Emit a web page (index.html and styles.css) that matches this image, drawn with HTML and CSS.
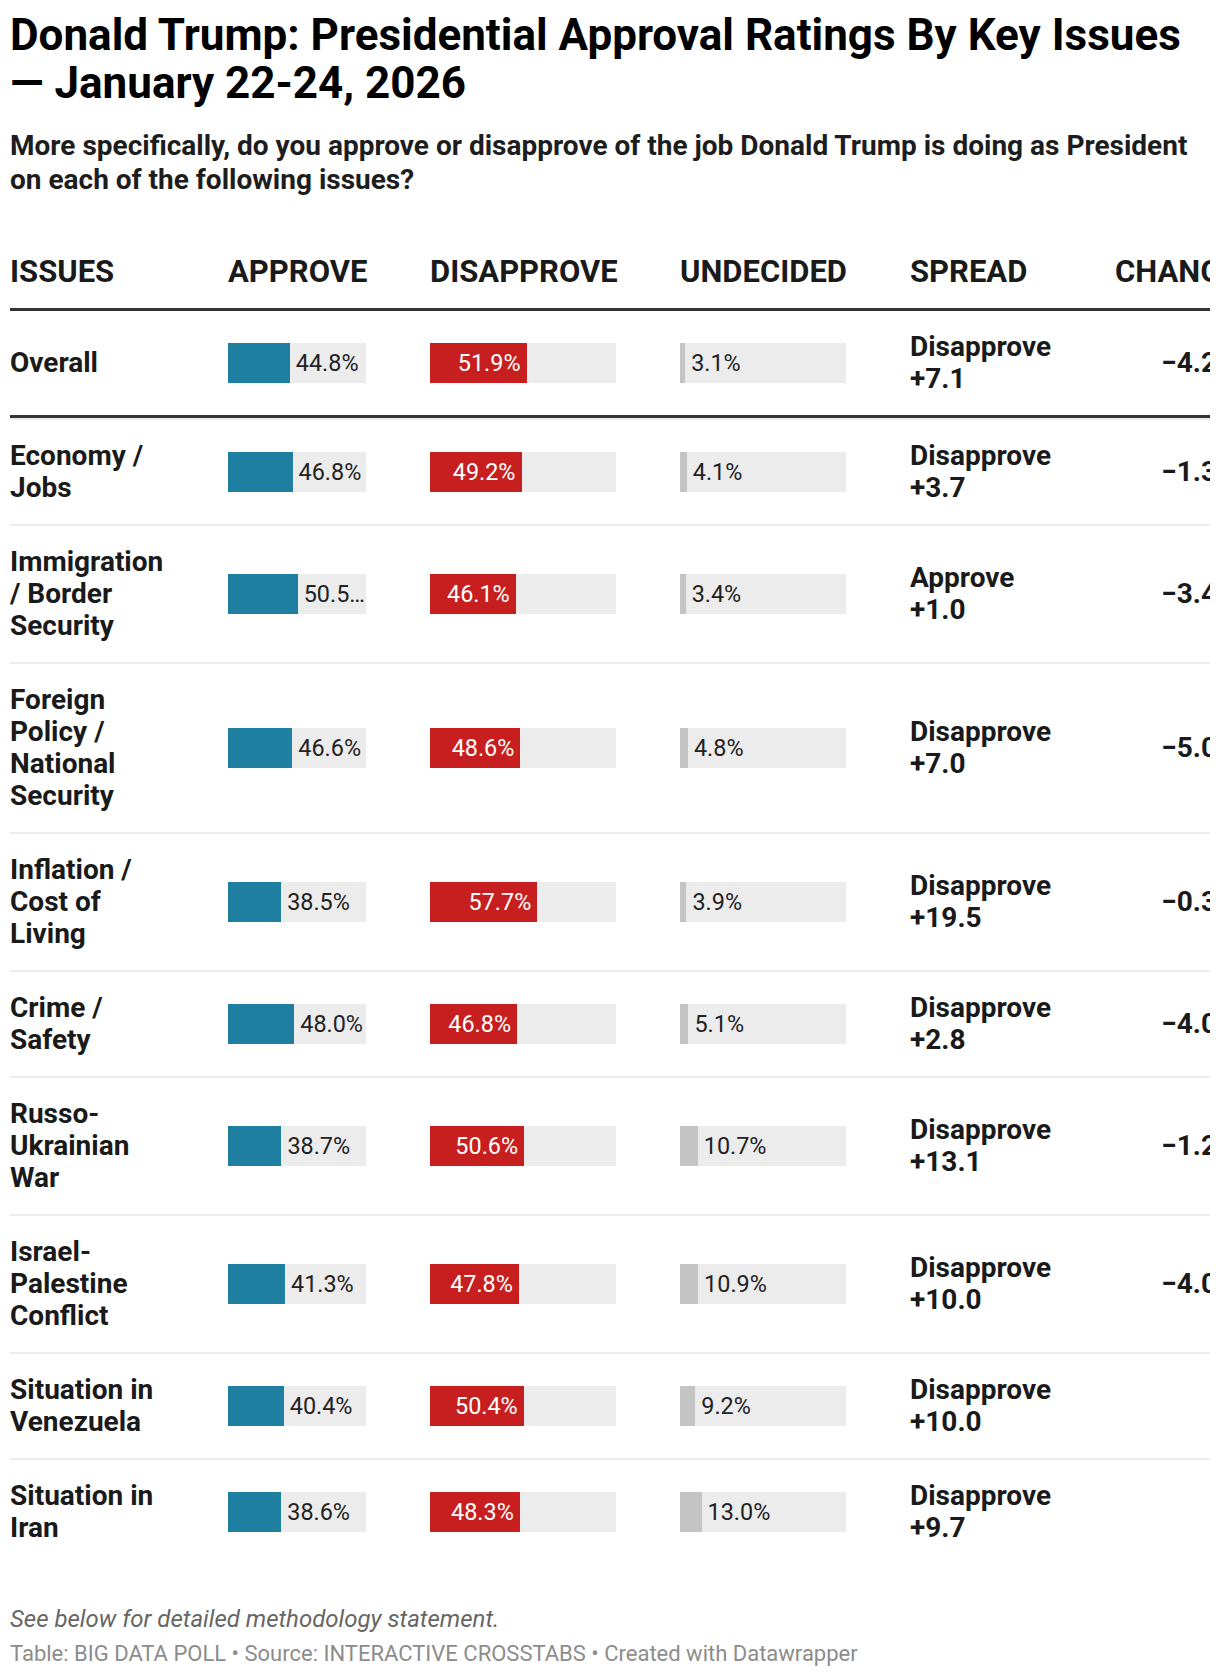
FILE: index.html
```html
<!DOCTYPE html>
<html lang="en">
<head>
<meta charset="utf-8">
<title>Donald Trump: Presidential Approval Ratings By Key Issues</title>
<link rel="stylesheet" href="styles.css">
</head>
<body>
<div class="page">
  <h1 class="title">Donald Trump: Presidential Approval Ratings By Key Issues — January 22-24, 2026</h1>
  <p class="subtitle">More specifically, do you approve or disapprove of the job Donald Trump is doing as President on each of the following issues?</p>

  <div class="table">
    <div class="row head">
      <div class="cell">Issues</div>
      <div class="cell">Approve</div>
      <div class="cell">Disapprove</div>
      <div class="cell">Undecided</div>
      <div class="cell">Spread</div>
      <div class="cell">Change</div>
    </div>

    <div class="row highlight">
      <div class="cell issue">Overall</div>
      <div class="cell"><div class="bar approve"><span class="fill" style="width:44.8%"></span><span class="label-out">44.8%</span></div></div>
      <div class="cell"><div class="bar disapprove"><span class="fill" style="width:51.9%"><span class="label-in">51.9%</span></span></div></div>
      <div class="cell"><div class="bar undecided"><span class="fill" style="width:3.1%"></span><span class="label-out">3.1%</span></div></div>
      <div class="cell spread">Disapprove +7.1</div>
      <div class="cell change">−4.2</div>
    </div>

    <div class="row after-highlight">
      <div class="cell issue">Economy / Jobs</div>
      <div class="cell"><div class="bar approve"><span class="fill" style="width:46.8%"></span><span class="label-out">46.8%</span></div></div>
      <div class="cell"><div class="bar disapprove"><span class="fill" style="width:49.2%"><span class="label-in">49.2%</span></span></div></div>
      <div class="cell"><div class="bar undecided"><span class="fill" style="width:4.1%"></span><span class="label-out">4.1%</span></div></div>
      <div class="cell spread">Disapprove +3.7</div>
      <div class="cell change">−1.3</div>
    </div>

    <div class="row">
      <div class="cell issue">Immigration / Border Security</div>
      <div class="cell"><div class="bar approve"><span class="fill" style="width:50.5%"></span><span class="label-out">50.5%</span></div></div>
      <div class="cell"><div class="bar disapprove"><span class="fill" style="width:46.1%"><span class="label-in">46.1%</span></span></div></div>
      <div class="cell"><div class="bar undecided"><span class="fill" style="width:3.4%"></span><span class="label-out">3.4%</span></div></div>
      <div class="cell spread">Approve +1.0</div>
      <div class="cell change">−3.4</div>
    </div>

    <div class="row">
      <div class="cell issue">Foreign Policy / National Security</div>
      <div class="cell"><div class="bar approve"><span class="fill" style="width:46.6%"></span><span class="label-out">46.6%</span></div></div>
      <div class="cell"><div class="bar disapprove"><span class="fill" style="width:48.6%"><span class="label-in">48.6%</span></span></div></div>
      <div class="cell"><div class="bar undecided"><span class="fill" style="width:4.8%"></span><span class="label-out">4.8%</span></div></div>
      <div class="cell spread">Disapprove +7.0</div>
      <div class="cell change">−5.0</div>
    </div>

    <div class="row">
      <div class="cell issue">Inflation / Cost of Living</div>
      <div class="cell"><div class="bar approve"><span class="fill" style="width:38.5%"></span><span class="label-out">38.5%</span></div></div>
      <div class="cell"><div class="bar disapprove"><span class="fill" style="width:57.7%"><span class="label-in">57.7%</span></span></div></div>
      <div class="cell"><div class="bar undecided"><span class="fill" style="width:3.9%"></span><span class="label-out">3.9%</span></div></div>
      <div class="cell spread">Disapprove +19.5</div>
      <div class="cell change">−0.3</div>
    </div>

    <div class="row">
      <div class="cell issue">Crime / Safety</div>
      <div class="cell"><div class="bar approve"><span class="fill" style="width:48.0%"></span><span class="label-out">48.0%</span></div></div>
      <div class="cell"><div class="bar disapprove"><span class="fill" style="width:46.8%"><span class="label-in">46.8%</span></span></div></div>
      <div class="cell"><div class="bar undecided"><span class="fill" style="width:5.1%"></span><span class="label-out">5.1%</span></div></div>
      <div class="cell spread">Disapprove +2.8</div>
      <div class="cell change">−4.0</div>
    </div>

    <div class="row">
      <div class="cell issue">Russo-Ukrainian War</div>
      <div class="cell"><div class="bar approve"><span class="fill" style="width:38.7%"></span><span class="label-out">38.7%</span></div></div>
      <div class="cell"><div class="bar disapprove"><span class="fill" style="width:50.6%"><span class="label-in">50.6%</span></span></div></div>
      <div class="cell"><div class="bar undecided"><span class="fill" style="width:10.7%"></span><span class="label-out">10.7%</span></div></div>
      <div class="cell spread">Disapprove +13.1</div>
      <div class="cell change">−1.2</div>
    </div>

    <div class="row">
      <div class="cell issue">Israel-Palestine Conflict</div>
      <div class="cell"><div class="bar approve"><span class="fill" style="width:41.3%"></span><span class="label-out">41.3%</span></div></div>
      <div class="cell"><div class="bar disapprove"><span class="fill" style="width:47.8%"><span class="label-in">47.8%</span></span></div></div>
      <div class="cell"><div class="bar undecided"><span class="fill" style="width:10.9%"></span><span class="label-out">10.9%</span></div></div>
      <div class="cell spread">Disapprove +10.0</div>
      <div class="cell change">−4.0</div>
    </div>

    <div class="row">
      <div class="cell issue">Situation in Venezuela</div>
      <div class="cell"><div class="bar approve"><span class="fill" style="width:40.4%"></span><span class="label-out">40.4%</span></div></div>
      <div class="cell"><div class="bar disapprove"><span class="fill" style="width:50.4%"><span class="label-in">50.4%</span></span></div></div>
      <div class="cell"><div class="bar undecided"><span class="fill" style="width:9.2%"></span><span class="label-out">9.2%</span></div></div>
      <div class="cell spread">Disapprove +10.0</div>
      <div class="cell change"></div>
    </div>

    <div class="row last">
      <div class="cell issue">Situation in Iran</div>
      <div class="cell"><div class="bar approve"><span class="fill" style="width:38.6%"></span><span class="label-out">38.6%</span></div></div>
      <div class="cell"><div class="bar disapprove"><span class="fill" style="width:48.3%"><span class="label-in">48.3%</span></span></div></div>
      <div class="cell"><div class="bar undecided"><span class="fill" style="width:13.0%"></span><span class="label-out">13.0%</span></div></div>
      <div class="cell spread">Disapprove +9.7</div>
      <div class="cell change"></div>
    </div>
  </div>

  <footer class="footer">
    <p class="notes">See below for detailed methodology statement.</p>
    <p class="source">Table: BIG DATA POLL • Source: INTERACTIVE CROSSTABS • Created with Datawrapper</p>
  </footer>
</div>
</body>
</html>
```

FILE: styles.css
```css
* { box-sizing: border-box; }

html, body {
  margin: 0;
  padding: 0;
  background: #ffffff;
}

body {
  font-family: Roboto, "Liberation Sans", Arial, sans-serif;
  color: #181818;
}

.page {
  width: 1200px;
  margin-left: 10px;
  padding-top: 11px;
  overflow: hidden;
}

.title {
  margin: 0;
  font-size: 44px;
  line-height: 48px;
  font-weight: 700;
  color: #000000;
}

.subtitle {
  margin: 22px 0 0;
  font-size: 28px;
  line-height: 34px;
  font-weight: 700;
  color: #1d1d1d;
}

.table {
  margin-top: 39px;
}

.row {
  display: grid;
  grid-template-columns: 154px 138px 186px 166px 141px 102px;
  grid-auto-rows: minmax(64px, auto);
  column-gap: 64px;
  align-items: center;
  padding: 20px 0;
  border-bottom: 2px solid #ececec;
}

.row.head {
  grid-auto-rows: auto;
  border-bottom: 3px solid #333333;
  font-size: 31px;
  line-height: 32px;
  font-weight: 700;
  text-transform: uppercase;
  color: #1a1a1a;
}

.row.head .cell {
  white-space: nowrap;
}

.row.highlight {
  border-bottom: 3px solid #333333;
}

.row.after-highlight {
  border-top: 2px solid #ececec;
}

.row.last {
  border-bottom: none;
}

.issue,
.spread,
.change {
  font-size: 28px;
  line-height: 32px;
  font-weight: 700;
  color: #1a1a1a;
}

.change {
  text-align: right;
  white-space: nowrap;
}

.bar {
  display: flex;
  height: 40px;
  background: #ececec;
  font-size: 23.4px;
  line-height: 40px;
  font-weight: 400;
}

.fill {
  flex: none;
  height: 100%;
}

.approve .fill { background: #1f7fa1; }
.disapprove .fill {
  background: #c71f1f;
  display: flex;
  justify-content: flex-end;
}
.undecided .fill { background: #c4c4c4; }

.label-out {
  flex: 1 1 auto;
  min-width: 0;
  padding: 0 1px 0 6px;
  white-space: nowrap;
  overflow: hidden;
  text-overflow: ellipsis;
  color: #222222;
}

.label-in {
  padding-right: 6px;
  white-space: nowrap;
  color: #ffffff;
}

.footer {
  margin-top: 40px;
}

.notes {
  margin: 0;
  font-size: 24px;
  line-height: 30px;
  font-style: italic;
  color: #666666;
}

.source {
  margin: 5px 0 0;
  font-size: 22px;
  line-height: 30px;
  color: #8c8c8c;
}
```
